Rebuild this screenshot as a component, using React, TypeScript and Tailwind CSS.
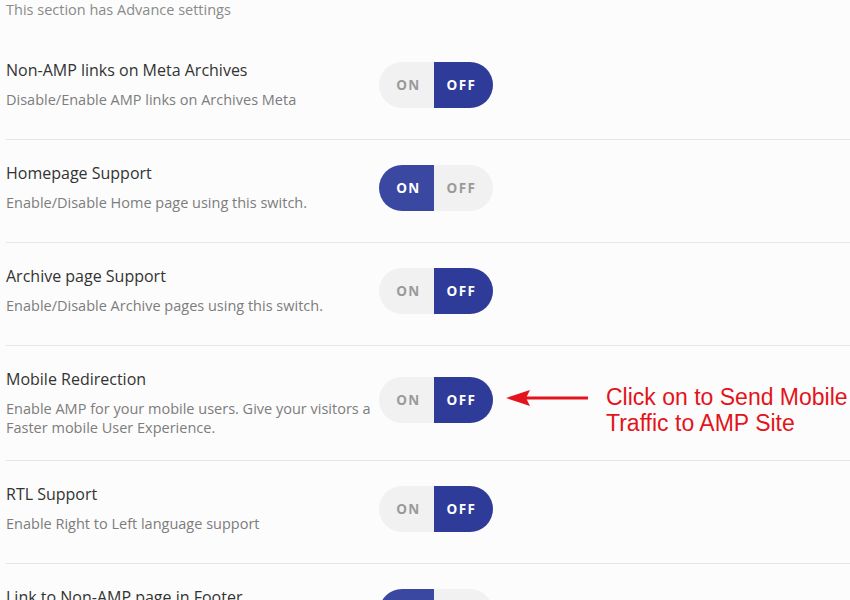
import React from "react";

type Row = {
  title: string;
  desc: string;
  on: boolean;
  note?: boolean;
};

const rows: Row[] = [
  {
    title: "Non-AMP links on Meta Archives",
    desc: "Disable/Enable AMP links on Archives Meta",
    on: false,
  },
  {
    title: "Homepage Support",
    desc: "Enable/Disable Home page using this switch.",
    on: true,
  },
  {
    title: "Archive page Support",
    desc: "Enable/Disable Archive pages using this switch.",
    on: false,
  },
  {
    title: "Mobile Redirection",
    desc: "Enable AMP for your mobile users. Give your visitors a Faster mobile User Experience.",
    on: false,
    note: true,
  },
  {
    title: "RTL Support",
    desc: "Enable Right to Left language support",
    on: false,
  },
  {
    title: "Link to Non-AMP page in Footer",
    desc: "Enable / Disable Link to Non-AMP page in the footer",
    on: true,
  },
];

// ON / OFF pill switch
const Switch = ({ on }: { on: boolean }) => (
  <div className="flex h-[46px] w-[114px] shrink-0 overflow-hidden rounded-full bg-[#f1f1f1] font-['Open_Sans',sans-serif] text-[13.5px] font-bold tracking-[1.5px]">
    <div
      className={`flex w-[55px] items-center justify-center pl-[4px] ${
        on ? "bg-[#3b48a2] text-white" : "text-[#9a9a9a]"
      }`}
    >
      ON
    </div>
    <div
      className={`flex w-[59px] items-center justify-center pr-[4px] ${
        on ? "text-[#9a9a9a]" : "bg-[#2e3b98] text-white"
      }`}
    >
      OFF
    </div>
  </div>
);

const Arrow = () => (
  <svg width="84" height="20" viewBox="0 0 84 20" className="shrink-0">
    <path d="M82 10 H20" stroke="#e3141b" strokeWidth="3" />
    <path d="M0 10 L24 2 L20 10 L24 18 Z" fill="#e3141b" />
  </svg>
);

export default function App() {
  return (
    <div className="h-[600px] w-[850px] overflow-hidden bg-[#fcfcfc] font-['Open_Sans',sans-serif]">
      <div className="h-[37px] pl-[6px] text-[14.5px] leading-[20px] text-[#8a8a8a]">
        This section has Advance settings
      </div>
      <div className="pl-[6px]">
        {rows.map((row, i) => (
          <div
            key={i}
            className="flex items-center border-b border-[#e6e6e6] pt-[21px] pb-[23px]"
          >
            <div className="min-h-[58px] w-[373px] shrink-0">
              <div className="text-[16px] font-medium leading-6 text-[#333]">
                {row.title}
              </div>
              <div className="mt-[8px] w-[368px] text-[14.5px] leading-[19px] text-[#7d7d7d]">
                {row.desc}
              </div>
            </div>
            <div className="mb-[4px] flex items-center">
              <Switch on={row.on} />
              {row.note && (
                <>
                  <div className="mb-[4px] ml-[13px]">
                    <Arrow />
                  </div>
                  <div className="-mb-[10px] ml-[16px] mt-[10px] whitespace-nowrap font-['Liberation_Sans',Arial,sans-serif] text-[23px] leading-[26px] text-[#e3141b]">
                    Click on to Send Mobile
                    <br />
                    Traffic to AMP Site
                  </div>
                </>
              )}
            </div>
          </div>
        ))}
      </div>
    </div>
  );
}
